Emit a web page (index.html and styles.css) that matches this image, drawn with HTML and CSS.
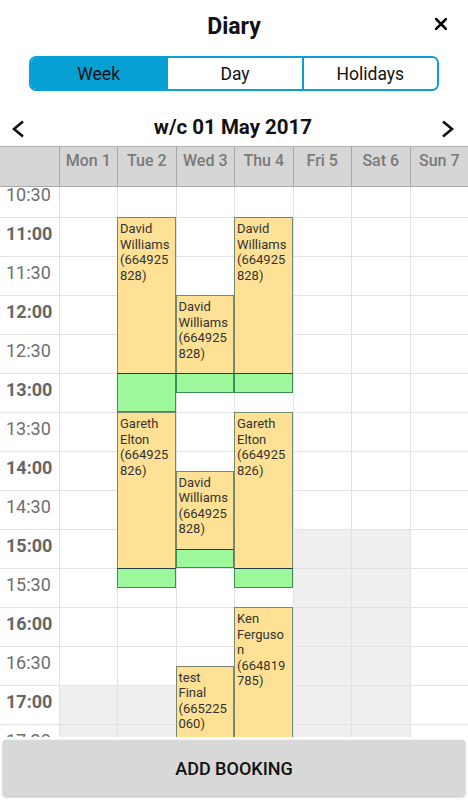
FILE: index.html
```html
<!DOCTYPE html>
<html lang="en">
<head>
<meta charset="utf-8">
<title>Diary</title>
<link rel="stylesheet" href="styles.css">
</head>
<body>
<div class="app">
  <header class="topbar">
    <span class="spacer"></span>
    <h1 class="title">Diary</h1>
    <button class="close" aria-label="Close">
      <svg width="12" height="12" viewBox="0 0 12 12"><path d="M1 1L11 11M11 1L1 11" stroke="#000" stroke-width="2.6" stroke-linecap="square" fill="none"/></svg>
    </button>
  </header>

  <nav class="tabs">
    <button class="tab active">Week</button>
    <button class="tab">Day</button>
    <button class="tab">Holidays</button>
  </nav>

  <div class="weeknav">
    <button class="arrow prev" aria-label="Previous week">
      <svg width="14" height="18" viewBox="0 0 14 18"><polyline points="12,1.5 3,9 12,16.5" stroke="#111" stroke-width="2.6" fill="none"/></svg>
    </button>
    <h2 class="week-title">w/c 01 May 2017</h2>
    <button class="arrow next" aria-label="Next week">
      <svg width="14" height="18" viewBox="0 0 14 18"><polyline points="2,1.5 11,9 2,16.5" stroke="#111" stroke-width="2.6" fill="none"/></svg>
    </button>
  </div>

  <div class="dayhead">
    <div class="corner"></div>
    <div class="dh">Mon 1</div>
    <div class="dh">Tue 2</div>
    <div class="dh">Wed 3</div>
    <div class="dh">Thu 4</div>
    <div class="dh">Fri 5</div>
    <div class="dh">Sat 6</div>
    <div class="dh">Sun 7</div>
  </div>

  <div class="body">
    <div class="grid">
      <div class="times">
        <div class="time">10:30</div>
        <div class="time hour">11:00</div>
        <div class="time">11:30</div>
        <div class="time hour">12:00</div>
        <div class="time">12:30</div>
        <div class="time hour">13:00</div>
        <div class="time">13:30</div>
        <div class="time hour">14:00</div>
        <div class="time">14:30</div>
        <div class="time hour">15:00</div>
        <div class="time">15:30</div>
        <div class="time hour">16:00</div>
        <div class="time">16:30</div>
        <div class="time hour">17:00</div>
        <div class="time">17:30</div>
      </div>

      <div class="col" style="grid-column: 2"></div>
      <div class="col" style="grid-column: 3"></div>
      <div class="col" style="grid-column: 4"></div>
      <div class="col" style="grid-column: 5"></div>
      <div class="col" style="grid-column: 6"></div>
      <div class="col" style="grid-column: 7"></div>
      <div class="col" style="grid-column: 8"></div>

      <div class="closed" style="grid-area: 27 / 2 / 31 / 3"></div>
      <div class="closed" style="grid-area: 27 / 3 / 31 / 4"></div>
      <div class="closed" style="grid-area: 19 / 6 / 31 / 7"></div>
      <div class="closed" style="grid-area: 19 / 7 / 31 / 8"></div>

      <div class="booking" style="grid-area: 3 / 3 / 11 / 4">David Williams (664925828)</div>
      <div class="buffer" style="grid-area: 11 / 3 / 13 / 4"></div>
      <div class="booking" style="grid-area: 13 / 3 / 21 / 4">Gareth Elton (664925826)</div>
      <div class="buffer" style="grid-area: 21 / 3 / 22 / 4"></div>

      <div class="booking" style="grid-area: 7 / 4 / 11 / 5">David Williams (664925828)</div>
      <div class="buffer" style="grid-area: 11 / 4 / 12 / 5"></div>
      <div class="booking" style="grid-area: 16 / 4 / 20 / 5">David Williams (664925828)</div>
      <div class="buffer" style="grid-area: 20 / 4 / 21 / 5"></div>
      <div class="booking" style="grid-area: 26 / 4 / 31 / 5">test Final (665225060)</div>

      <div class="booking" style="grid-area: 3 / 5 / 11 / 6">David Williams (664925828)</div>
      <div class="buffer" style="grid-area: 11 / 5 / 12 / 6"></div>
      <div class="booking" style="grid-area: 13 / 5 / 21 / 6">Gareth Elton (664925826)</div>
      <div class="buffer" style="grid-area: 21 / 5 / 22 / 6"></div>
      <div class="booking" style="grid-area: 23 / 5 / 31 / 6">Ken Ferguson (664819785)</div>
    </div>
  </div>

  <footer class="footer">
    <button class="add">ADD BOOKING</button>
  </footer>
</div>
</body>
</html>
```

FILE: styles.css
```css
* { box-sizing: border-box; }

html, body {
  margin: 0;
  padding: 0;
  background: #fff;
}

body {
  font-family: Roboto, "Liberation Sans", Arial, sans-serif;
  color: #111;
}

button {
  font-family: inherit;
  cursor: pointer;
}

.app {
  width: 468px;
  height: 800px;
  display: flex;
  flex-direction: column;
  overflow: hidden;
}

/* top bar */
.topbar {
  height: 54px;
  flex: none;
  display: grid;
  grid-template-columns: 1fr auto 1fr;
}

.title {
  margin: 0;
  font-size: 23px;
  font-weight: 700;
  line-height: 54px;
  color: #111;
}

.close {
  justify-self: end;
  align-self: start;
  margin: 18px 21px 0 0;
  padding: 0;
  width: 12px;
  height: 12px;
  border: 0;
  background: none;
  display: flex;
}

/* tabs */
.tabs {
  flex: none;
  margin: 2px 29px 0;
  height: 35px;
  display: grid;
  grid-template-columns: repeat(3, 1fr);
  border: 2px solid #0a9fd6;
  border-radius: 7px;
  overflow: hidden;
}

.tab {
  border: 0;
  background: #fff;
  font-size: 17.5px;
  color: #111;
  line-height: 31px;
  padding: 1px 0 0;
}

.tab + .tab {
  border-left: 2px solid #0a9fd6;
}

.tab.active {
  background: #069fd3;
}

/* week nav */
.weeknav {
  flex: none;
  height: 55px;
  padding: 18px 13px 0 11px;
  display: grid;
  grid-template-columns: 1fr auto 1fr;
  align-items: center;
}

.week-title {
  margin: 0;
  font-size: 20.5px;
  font-weight: 700;
  line-height: 37px;
  color: #111;
}

.arrow {
  border: 0;
  background: none;
  padding: 0;
  margin-top: 3px;
  display: flex;
}

.arrow.prev { justify-self: start; }
.arrow.next { justify-self: end; }

/* day header */
.dayhead {
  flex: none;
  height: 41px;
  display: grid;
  grid-template-columns: repeat(8, 1fr);
  background: #d6d6d6;
  border-top: 1px solid #b0b0b0;
  border-bottom: 1px solid #a8a8a8;
}

.dh {
  border-left: 1px solid #a8a8a8;
  text-align: center;
  font-size: 16px;
  font-weight: 500;
  color: #7a7a7a;
  padding-top: 3px;
  line-height: 22px;
}

/* grid body */
.body {
  flex: 1;
  overflow: hidden;
  min-height: 0;
}

.grid {
  margin-top: -9px;
  display: grid;
  grid-template-columns: repeat(8, 1fr);
  grid-template-rows: repeat(30, 19.5px);
}

.times,
.col,
.closed {
  background-image: repeating-linear-gradient(to bottom, #e2e2e2 0, #e2e2e2 1px, transparent 1px, transparent 39px);
}

.times {
  grid-column: 1;
  grid-row: 1 / -1;
  display: flex;
  flex-direction: column;
}

.time {
  height: 39px;
  flex: none;
  padding-left: 6px;
  font-size: 18px;
  line-height: 33px;
  color: #6e6e6e;
}

.time.hour {
  font-weight: 700;
  color: #666;
}

.col {
  grid-row: 1 / -1;
  border-left: 1px solid #e2e2e2;
}

.closed {
  background-color: #efefef;
  border-left: 1px solid #e2e2e2;
}

.booking {
  background: #fee195;
  border: 1px solid #76896f;
  border-bottom: 0;
  padding: 3px 3px 0 2px;
  font-size: 13px;
  line-height: 15.5px;
  color: #333;
  overflow: hidden;
  overflow-wrap: anywhere;
}

.buffer {
  background: #9cf89a;
  border: 1px solid #3d8f55;
  border-top-color: #1d3d40;
}

/* footer */
.footer {
  flex: none;
  height: 63px;
  padding: 3px 3px 4px;
}

.add {
  width: 100%;
  height: 56px;
  border: 0;
  border-radius: 3px;
  background: #d7d8d7;
  box-shadow: 0 1px 3px rgba(0, 0, 0, 0.3);
  font-size: 18px;
  font-weight: 500;
  color: #111;
}
```
